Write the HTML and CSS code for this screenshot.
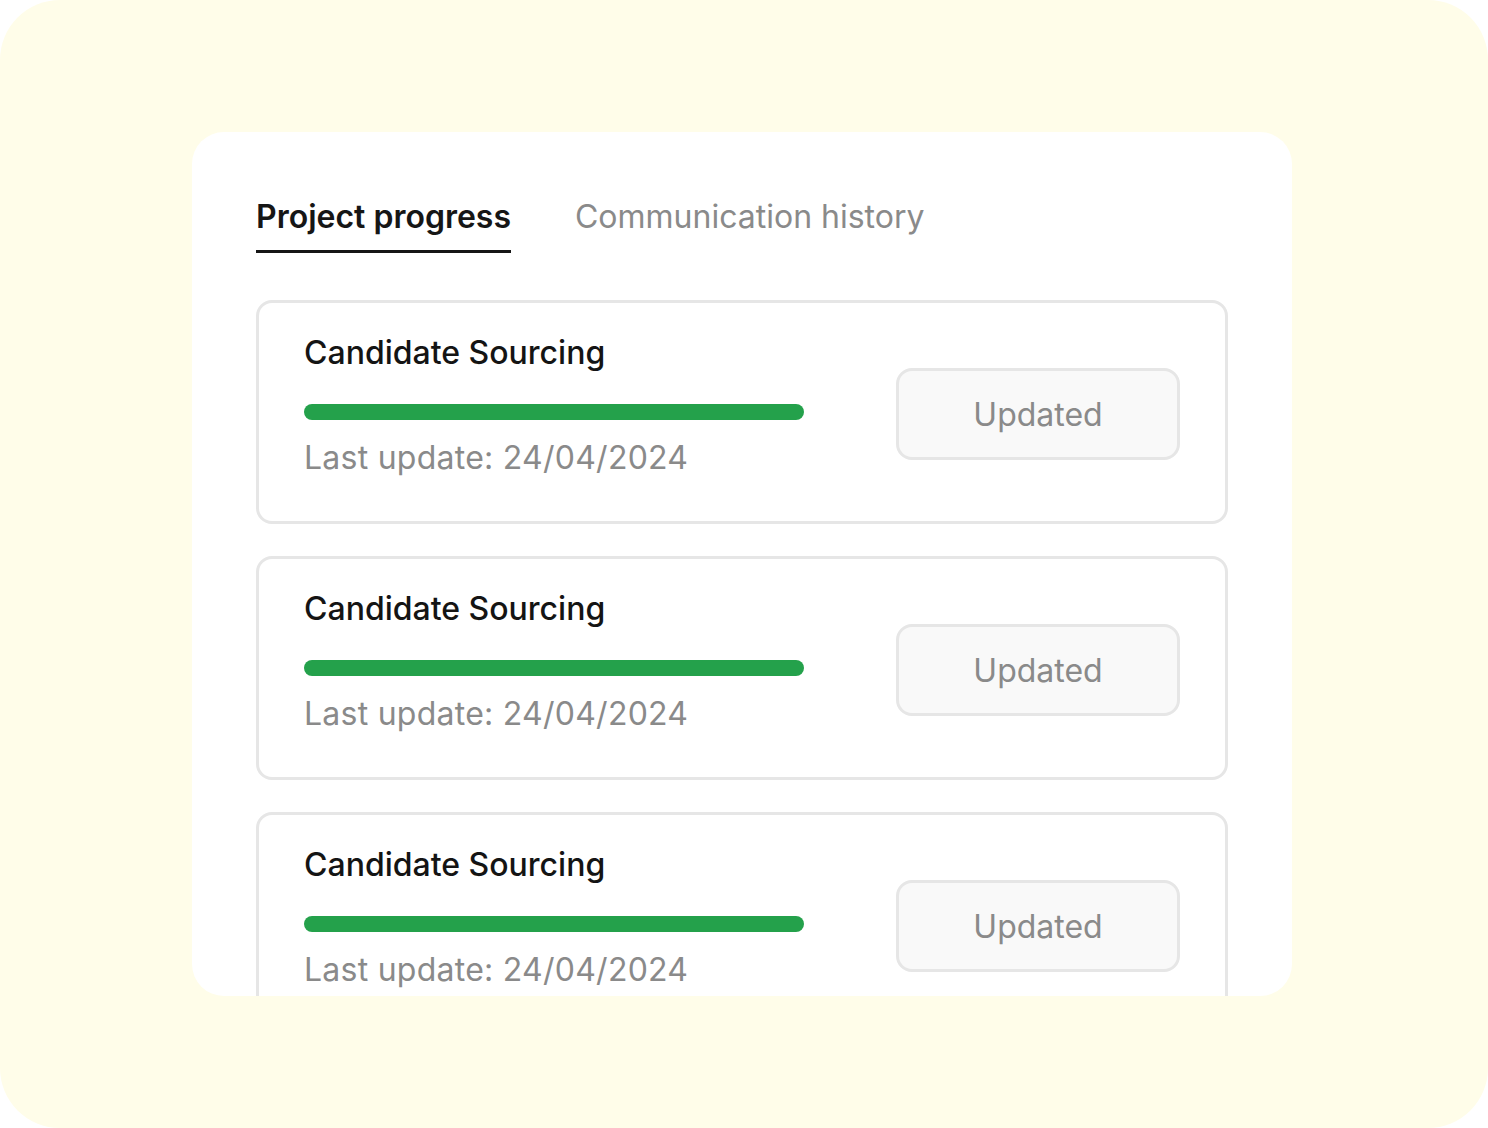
FILE: index.html
```html
<!DOCTYPE html>
<html lang="en">
<head>
<meta charset="utf-8">
<title>Project progress</title>
<link rel="stylesheet" href="styles.css">
</head>
<body>
<div class="frame">
  <section class="panel">
    <nav class="tabs">
      <span class="tab active">Project progress</span>
      <span class="tab">Communication history</span>
    </nav>
    <div class="list">
      <article class="item">
        <div class="info">
          <h3 class="title">Candidate Sourcing</h3>
          <div class="bar"></div>
          <p class="meta">Last update: 24/04/2024</p>
        </div>
        <button class="status">Updated</button>
      </article>
      <article class="item">
        <div class="info">
          <h3 class="title">Candidate Sourcing</h3>
          <div class="bar"></div>
          <p class="meta">Last update: 24/04/2024</p>
        </div>
        <button class="status">Updated</button>
      </article>
      <article class="item">
        <div class="info">
          <h3 class="title">Candidate Sourcing</h3>
          <div class="bar"></div>
          <p class="meta">Last update: 24/04/2024</p>
        </div>
        <button class="status">Updated</button>
      </article>
    </div>
  </section>
</div>
</body>
</html>
```

FILE: styles.css
```css
* { box-sizing: border-box; }
html, body {
  margin: 0;
  padding: 0;
  background: #ffffff;
}
body {
  font-family: Inter, "Noto Sans", "Liberation Sans", sans-serif;
  width: 1488px;
  height: 1128px;
  overflow: hidden;
}
.frame {
  width: 1488px;
  height: 1128px;
  background: #fffde9;
  border-radius: 60px;
  padding: 132px 196px 0 192px;
}
.panel {
  width: 1100px;
  height: 864px;
  background: #ffffff;
  border-radius: 32px;
  overflow: hidden;
  padding: 67px 64px 0 64px;
}
.tabs {
  display: flex;
  gap: 64px;
  align-items: flex-start;
}
.tab {
  font-size: 32px;
  line-height: 36px;
  color: #8a8a8a;
  font-weight: 400;
}
.tab.active {
  color: #161616;
  font-weight: 600;
  padding-bottom: 15px;
  border-bottom: 3px solid #161616;
}
.list {
  margin-top: 47px;
  display: flex;
  flex-direction: column;
  gap: 32px;
}
.item {
  flex-shrink: 0;
  height: 224px;
  border: 3px solid #e6e6e6;
  border-radius: 16px;
  padding: 32px 45px 0 45px;
  display: flex;
  justify-content: space-between;
  align-items: flex-start;
}
.info {
  display: flex;
  flex-direction: column;
}
.title {
  margin: 0;
  font-size: 32px;
  line-height: 36px;
  font-weight: 500;
  color: #141414;
}
.bar {
  width: 500px;
  height: 16px;
  border-radius: 8px;
  background: #24a14b;
  margin-top: 33px;
}
.meta {
  margin: 20px 0 0 0;
  font-size: 32px;
  line-height: 36px;
  letter-spacing: 0.25px;
  color: #8a8a8a;
  font-weight: 400;
}
.status {
  margin-top: 33px;
  width: 284px;
  height: 92px;
  border: 3px solid #e6e6e6;
  border-radius: 16px;
  background: #f9f9f9;
  font-family: Inter, "Noto Sans", "Liberation Sans", sans-serif;
  font-size: 32px;
  color: #8a8a8a;
  font-weight: 400;
  padding: 0;
}
```
